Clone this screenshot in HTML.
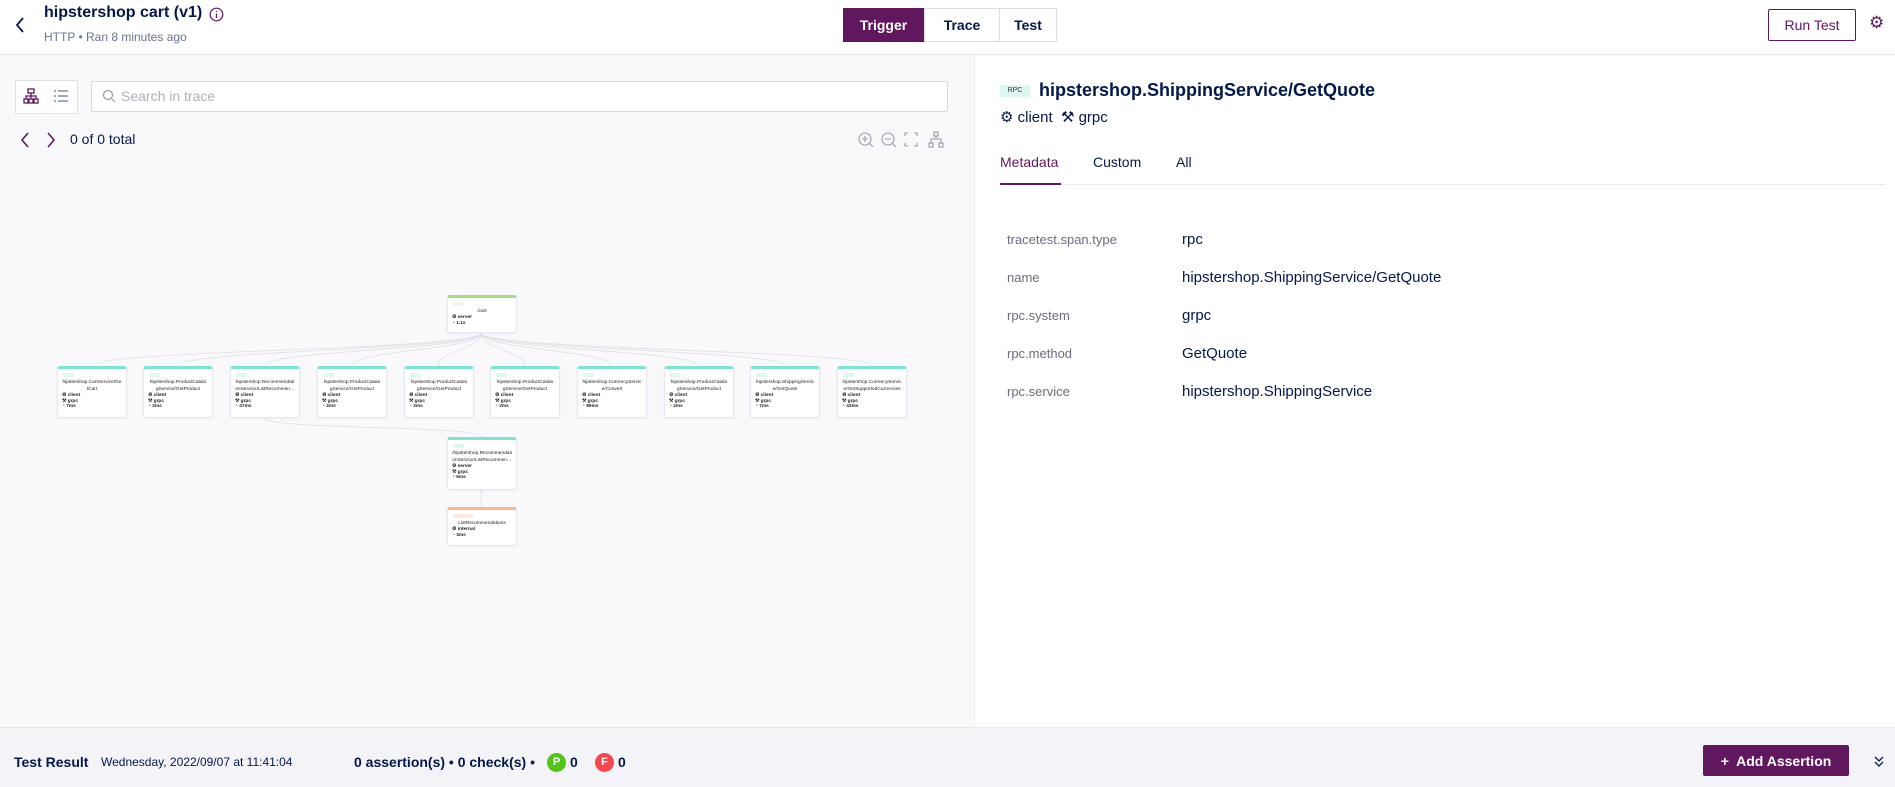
<!DOCTYPE html>
<html><head><meta charset="utf-8"><style>
*{box-sizing:border-box;margin:0;padding:0}
body{width:1895px;height:787px;overflow:hidden;font-family:"Liberation Sans",sans-serif;background:#fff;position:relative;color:#031849}
.abs{position:absolute}
.hdr{left:0;top:0;width:1895px;height:55px;border-bottom:1px solid #e4e4ea;background:#fff}
.left{left:0;top:55px;width:975px;height:672px;background:#f9f9fc;border-right:1px solid #ececf0}
.btn{position:absolute;top:8px;height:34px;border:1px solid #dcdce4;font-weight:bold;font-size:14px;display:flex;align-items:center;justify-content:center;color:#031849;background:#fff}
.node{position:absolute;width:70px;background:#fff;border:1px solid #e6e6ee;border-radius:3px;border-top:3px solid #7ee3d4;font-size:4.8px;color:#222;box-shadow:0 1px 2px rgba(0,0,0,.05)}
.node .b{margin:4px 0 0 5px;width:11px;height:4px;background:#dff7f3;border-radius:1px}
.node .t{text-align:center;line-height:7px;margin-top:2px;padding:0 3px}
.node .r{margin-left:4px;line-height:5.5px;font-weight:bold}
.key{position:absolute;left:1007px;font-size:13px;color:#6b6b80}
.val{position:absolute;left:1182px;font-size:15px;color:#031849}
.foot{left:0;top:727px;width:1895px;height:60px;background:#f4f4f8;border-top:1px solid #e8e8ee}
</style></head><body>
<div class="abs hdr"></div>
<svg class="abs" style="left:14px;top:16px" width="12" height="18" viewBox="0 0 12 18"><path d="M9 2 L3 9 L9 16" stroke="#031849" stroke-width="1.8" fill="none"/></svg>
<div class="abs" style="left:44px;top:4px;font-size:16px;font-weight:bold">hipstershop cart (v1)</div>
<svg class="abs" style="left:209px;top:7px" width="15" height="15" viewBox="0 0 15 15"><circle cx="7.5" cy="7.5" r="6.3" stroke="#61175e" stroke-width="1.2" fill="none"/><path d="M7.5 6.5V11M7.5 4v1" stroke="#61175e" stroke-width="1.3"/></svg>
<div class="abs" style="left:44px;top:30px;font-size:12px;color:#687492">HTTP • Ran 8 minutes ago</div>
<div class="btn" style="left:843px;width:81px;background:#61175e;color:#fff;border-color:#61175e">Trigger</div>
<div class="btn" style="left:924px;width:76px">Trace</div>
<div class="btn" style="left:999px;width:58px">Test</div>
<div class="abs" style="left:1768px;top:9px;width:88px;height:32px;border:1px solid #61175e;border-radius:2px;font-size:14px;display:flex;align-items:center;justify-content:center;color:#61175e">Run Test</div>
<div class="abs" style="left:1869px;top:13px;font-size:17px;color:#61175e">⚙</div>

<div class="abs left"></div>
<div class="abs" style="left:15px;top:80px;width:63px;height:34px;border:1px solid #e0e0e8;background:#fff"></div>
<svg class="abs" style="left:23px;top:88px" width="16" height="16" viewBox="0 0 16 16" fill="none" stroke="#61175e" stroke-width="1.3"><rect x="5" y="1" width="6" height="4"/><rect x="1" y="11" width="4" height="4"/><rect x="11" y="11" width="4" height="4"/><path d="M8 5v3M3 11V8h10v3M8 8v3"/><rect x="6" y="11" width="4" height="4"/></svg>
<svg class="abs" style="left:53px;top:88px" width="16" height="16" viewBox="0 0 16 16" stroke="#687492" stroke-width="1.3"><path d="M5 3h10M5 8h10M5 13h10M1 3h2M1 8h2M1 13h2"/></svg>
<div class="abs" style="left:91px;top:81px;width:857px;height:31px;border:1px solid #d9d9e1;background:#fff;border-radius:2px"></div>
<svg class="abs" style="left:102px;top:89px" width="14" height="14" viewBox="0 0 14 14" fill="none" stroke="#9a9aab" stroke-width="1.2"><circle cx="6" cy="6" r="4.5"/><path d="M9.5 9.5L13 13"/></svg>
<div class="abs" style="left:121px;top:88px;font-size:14px;color:#b0b0bd">Search in trace</div>
<svg class="abs" style="left:18px;top:131px" width="40" height="18" viewBox="0 0 40 18" fill="none" stroke="#61175e" stroke-width="1.6"><path d="M10 2L4 9l6 7M30 2l6 7-6 7"/></svg>
<div class="abs" style="left:70px;top:131px;font-size:14px;color:#031849">0 of 0 total</div>
<svg class="abs" style="left:857px;top:131px" width="90" height="18" viewBox="0 0 90 18" fill="none" stroke="#9a9aab" stroke-width="1.1"><circle cx="8" cy="8" r="6"/><path d="M12.5 12.5L16 16M5 8h6M8 5v6"/><circle cx="31" cy="8" r="6"/><path d="M35.5 12.5L39 16M28 8h6"/><path d="M48 5V2h3M57 2h3v3M60 12v3h-3M51 15h-3v-3"/><rect x="77" y="1" width="4" height="4"/><rect x="72" y="12" width="4" height="4"/><rect x="82" y="12" width="4" height="4"/><path d="M79 5v3M74 12V8h10v4"/></svg>

<svg class="abs" style="left:0;top:0" width="975" height="727" fill="none" stroke="#dedee6" stroke-width="0.8">
<path d="M481 333C481 350 92 350 92 366M481 333C481 350 178 350 178 366M481 333C481 350 265 350 265 366M481 333C481 350 352 350 352 366M481 333C481 350 438 350 438 366M481 333C481 350 525 350 525 366M481 333C481 350 612 350 612 366M481 333C481 350 698 350 698 366M481 333C481 350 785 350 785 366M481 333C481 350 872 350 872 366M265 418C265 430 481 425 481 437M481 490V507"/>
</svg>
<div class="node" style="left:447px;top:295px;height:38px;border-top-color:#a8dc82"><div class="b" style="background:#eef8e6"></div><div class="t">/cart</div><div class="r">⚙ server</div><div class="r">◔ 1.1s</div></div>
<div class="node" style="left:57px;top:366px;height:52px"><div class="b"></div><div class="t">hipstershop.CartService/Ge tCart</div><div class="r">⚙ client</div><div class="r">⚒ grpc</div><div class="r">◔ 7ms</div></div>
<div class="node" style="left:143px;top:366px;height:52px"><div class="b"></div><div class="t">hipstershop.ProductCatalo gService/GetProduct</div><div class="r">⚙ client</div><div class="r">⚒ grpc</div><div class="r">◔ 2ms</div></div>
<div class="node" style="left:230px;top:366px;height:52px"><div class="b"></div><div class="t">hipstershop.Recommendati onService/ListRecommen…</div><div class="r">⚙ client</div><div class="r">⚒ grpc</div><div class="r">◔ 47ms</div></div>
<div class="node" style="left:317px;top:366px;height:52px"><div class="b"></div><div class="t">hipstershop.ProductCatalo gService/GetProduct</div><div class="r">⚙ client</div><div class="r">⚒ grpc</div><div class="r">◔ 2ms</div></div>
<div class="node" style="left:404px;top:366px;height:52px"><div class="b"></div><div class="t">hipstershop.ProductCatalo gService/GetProduct</div><div class="r">⚙ client</div><div class="r">⚒ grpc</div><div class="r">◔ 2ms</div></div>
<div class="node" style="left:490px;top:366px;height:52px"><div class="b"></div><div class="t">hipstershop.ProductCatalo gService/GetProduct</div><div class="r">⚙ client</div><div class="r">⚒ grpc</div><div class="r">◔ 2ms</div></div>
<div class="node" style="left:577px;top:366px;height:52px"><div class="b"></div><div class="t">hipstershop.CurrencyServic e/Convert</div><div class="r">⚙ client</div><div class="r">⚒ grpc</div><div class="r">◔ 89ms</div></div>
<div class="node" style="left:664px;top:366px;height:52px"><div class="b"></div><div class="t">hipstershop.ProductCatalo gService/GetProduct</div><div class="r">⚙ client</div><div class="r">⚒ grpc</div><div class="r">◔ 2ms</div></div>
<div class="node" style="left:750px;top:366px;height:52px"><div class="b"></div><div class="t">hipstershop.ShippingServic e/GetQuote</div><div class="r">⚙ client</div><div class="r">⚒ grpc</div><div class="r">◔ 7ms</div></div>
<div class="node" style="left:837px;top:366px;height:52px"><div class="b"></div><div class="t">hipstershop.CurrencyServic e/GetSupportedCurrencies</div><div class="r">⚙ client</div><div class="r">⚒ grpc</div><div class="r">◔ 43ms</div></div>
<div class="node" style="left:447px;top:437px;height:53px"><div class="b"></div><div class="t">/hipstershop.Recommendati onService/ListRecommen…</div><div class="r">⚙ server</div><div class="r">⚒ grpc</div><div class="r">◔ 6ms</div></div>
<div class="node" style="left:447px;top:507px;height:39px;border-top-color:#f9b894"><div class="b" style="width:20px;background:#fde9e0"></div><div class="t">ListRecommendations</div><div class="r">⚙ internal</div><div class="r">◔ 3ms</div></div>

<div class="abs" style="left:1000px;top:85px;width:30px;height:12px;background:#dcf7f2;font-size:7px;color:#333;text-align:center;line-height:12px">RPC</div>
<div class="abs" style="left:1039px;top:80px;font-size:18px;font-weight:bold;color:#031849">hipstershop.ShippingService/GetQuote</div>
<div class="abs" style="left:1000px;top:108px;font-size:15px;color:#031849">⚙ client &nbsp;⚒ grpc</div>
<div class="abs" style="left:1000px;top:154px;font-size:14px;color:#61175e">Metadata</div>
<div class="abs" style="left:1093px;top:154px;font-size:14px;color:#031849">Custom</div>
<div class="abs" style="left:1176px;top:154px;font-size:14px;color:#031849">All</div>
<div class="abs" style="left:1000px;top:184px;width:885px;height:1px;background:#e8e8ee"></div>
<div class="abs" style="left:1000px;top:183px;width:61px;height:2px;background:#61175e"></div>
<div class="key" style="top:232px">tracetest.span.type</div><div class="val" style="top:231px">rpc</div>
<div class="key" style="top:270px">name</div><div class="val" style="top:269px">hipstershop.ShippingService/GetQuote</div>
<div class="key" style="top:308px">rpc.system</div><div class="val" style="top:307px">grpc</div>
<div class="key" style="top:346px">rpc.method</div><div class="val" style="top:345px">GetQuote</div>
<div class="key" style="top:384px">rpc.service</div><div class="val" style="top:383px">hipstershop.ShippingService</div>

<div class="abs foot"></div>
<div class="abs" style="left:14px;top:754px;font-size:14px;font-weight:bold">Test Result</div>
<div class="abs" style="left:101px;top:755px;font-size:12px">Wednesday, 2022/09/07 at 11:41:04</div>
<div class="abs" style="left:354px;top:754px;font-size:14px;font-weight:bold">0 assertion(s) • 0 check(s) •</div>
<div class="abs" style="left:547px;top:753px;width:19px;height:19px;border-radius:50%;background:#52c41a;color:#fff;font-size:11px;font-weight:bold;text-align:center;line-height:19px">P</div>
<div class="abs" style="left:570px;top:754px;font-size:14px;font-weight:bold">0</div>
<div class="abs" style="left:595px;top:753px;width:19px;height:19px;border-radius:50%;background:#f5474f;color:#fff;font-size:11px;font-weight:bold;text-align:center;line-height:19px">F</div>
<div class="abs" style="left:618px;top:754px;font-size:14px;font-weight:bold">0</div>
<div class="abs" style="left:1703px;top:745px;width:146px;height:31px;background:#61175e;border-radius:2px;color:#fff;font-size:14px;font-weight:bold;display:flex;align-items:center;justify-content:center">+&nbsp; Add Assertion</div>
<svg class="abs" style="left:1872px;top:754px" width="14" height="14" viewBox="0 0 14 14" fill="none" stroke="#031849" stroke-width="1.3"><path d="M3 3l4 4 4-4M3 8l4 4 4-4"/></svg>
</body></html>
